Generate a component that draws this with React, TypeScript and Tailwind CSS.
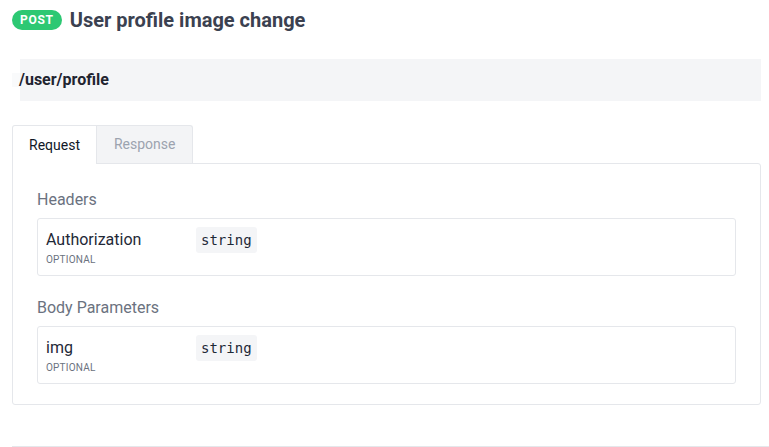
export default function App() {
  return (
    <div className="bg-white min-h-screen pl-3 pt-[10px] font-['Roboto',sans-serif]">
      <div className="flex items-center gap-2 h-5">
        <span className="rounded-full bg-[#2dc873] text-white text-[12px] font-bold tracking-[0.06em] leading-5 h-5 px-2">
          POST
        </span>
        <h1 className="text-[20px] font-bold text-[#3b4150] leading-5">User profile image change</h1>
      </div>

      <div className="mt-[29px] flex items-center h-[42px] mr-2">
        <span className="h-[14px] w-2 bg-[#f9fafb] self-center" />
        <div className="flex-1 h-full bg-[#f4f5f7] flex items-center">
          <span className="text-[16px] font-bold text-[#1f2430] -ml-[1px]">/user/profile</span>
        </div>
      </div>

      <div className="mt-6 mr-2">
        <div className="flex">
          <button className="h-[39px] px-[16px] text-[14px] text-[#111827] bg-white border border-[#e5e7eb] border-b-0 rounded-tl-[3px] relative z-10 -mb-px">
            Request
          </button>
          <button className="h-[38px] px-[17px] text-[14px] text-[#9ca3af] bg-[#f3f4f6] border border-l-0 border-[#e5e7eb] border-b-0 rounded-tr-[3px]">
            Response
          </button>
        </div>
        <div className="border border-[#e5e7eb] rounded-b-[3px] rounded-tr-[3px] px-6 pt-6 pb-5">
          <Section title="Headers" name="Authorization" />
          <div className="mt-5">
            <Section title="Body Parameters" name="img" />
          </div>
        </div>
      </div>

      <div className="mt-[41px] border-t border-[#e5e7eb]" />
    </div>
  )
}

function Section({ title, name }: { title: string; name: string }) {
  return (
    <div>
      <div className="text-[16px] leading-6 text-[#6b7280]">{title}</div>
      <div className="mt-1.5 border border-[#e5e7eb] rounded-[3px] px-2 pt-2 pb-2 flex">
        <div className="w-[150px]">
          <div className="text-[16px] leading-[26px] text-[#1f2937]">{name}</div>
          <div className="text-[10px] leading-[14px] text-[#6b7280] tracking-[0.02em]">OPTIONAL</div>
        </div>
        <div>
          <code className="inline-block bg-[#f4f5f7] rounded-[3px] px-[5px] h-[26px] leading-[26px] text-[14px] text-[#1f2937] font-['DejaVu_Sans_Mono',monospace]">
            string
          </code>
        </div>
      </div>
    </div>
  )
}
